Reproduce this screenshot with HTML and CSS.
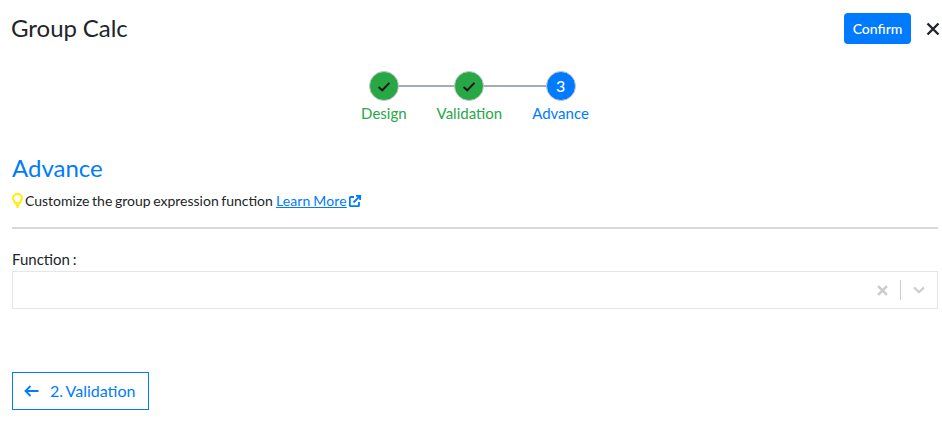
FILE: index.html
```html
<!DOCTYPE html>
<html>
<head>
  <link rel="stylesheet" href="styles.css">
</head>
<body>
  <header class="topbar">
    <h1 class="title">Group Calc</h1>
    <div class="actions">
      <button class="confirm">Confirm</button>
      <svg class="close" width="14" height="14" viewBox="0 0 14 14" fill="none" stroke="#212529" stroke-width="2.4">
        <path d="M1.5 1.5l11 11M12.5 1.5l-11 11"/>
      </svg>
    </div>
  </header>

  <div class="stepper">
    <div class="step done">
      <div class="circle">
        <svg width="16" height="13" viewBox="0 0 14 12" fill="none" stroke="#14181c" stroke-width="1.8"><path d="M2 6.5l3.4 3L12 2.6"/></svg>
      </div>
      <span>Design</span>
    </div>
    <div class="step done">
      <div class="circle">
        <svg width="16" height="13" viewBox="0 0 14 12" fill="none" stroke="#14181c" stroke-width="1.8"><path d="M2 6.5l3.4 3L12 2.6"/></svg>
      </div>
      <span>Validation</span>
    </div>
    <div class="step active">
      <div class="circle">3</div>
      <span>Advance</span>
    </div>
  </div>

  <section class="content">
    <h2 class="heading">Advance</h2>
    <p class="hint">
      <svg class="bulb" width="11" height="15" viewBox="0 0 11 15" fill="none" stroke="#ffee00" stroke-width="2">
        <path d="M3.4 10.2C3.2 8.4 1 7.4 1 5.1 1 2.8 3 1 5.5 1S10 2.8 10 5.1c0 2.3-2.2 3.3-2.4 5.1z"/>
        <path d="M3.8 12.2h3.4M4.5 14h2"/>
      </svg>
      <span>Customize the group expression function</span>
      <a href="#">Learn More</a>
      <svg class="ext" width="12" height="12" viewBox="0 0 12 12" fill="none" stroke="#007bff" stroke-width="1.8">
        <path d="M5 2H1.8A1 1 0 0 0 .8 3v7.200a1 1 0 0 0 1 1H9a1 1 0 0 0 1-1V7"/>
        <path d="M4.500 7.500L10.800 1.200M7 .9h4.100V5"/>
      </svg>
    </p>
    <hr class="rule">

    <label class="field-label">Function :</label>
    <div class="select">
      <svg width="11" height="11" viewBox="0 0 10 10" fill="none" stroke="#cccccc" stroke-width="2.4"><path d="M1 1l8 8M9 1l-8 8"/></svg>
      <div class="sep"></div>
      <svg class="chev" width="12" height="8" viewBox="0 0 12 8" fill="none" stroke="#cccccc" stroke-width="2.2"><path d="M1 1.500l5 4.500 5-4.500"/></svg>
    </div>

    <button class="back">
      <svg width="15" height="12" viewBox="0 0 15 12" fill="none" stroke="#007bff" stroke-width="1.800"><path d="M14.500 6H1.500M6.500 1l-5 5 5 5"/></svg>
      <span class="back-label">2. Validation</span>
    </button>
  </section>
</body>
</html>
```

FILE: styles.css
```css
* {
  margin: 0;
  padding: 0;
  box-sizing: border-box;
  font-family: Lato, sans-serif;
}

body {
  background: white;
  color: #212529;
  overflow: hidden;
}

.topbar {
  display: flex;
  justify-content: space-between;
  align-items: flex-start;
  padding: 13px 2px 0 11px;
}

.title {
  font-size: 24px;
  font-weight: 400;
  line-height: 29px;
  word-spacing: -0.5px;
}

.actions {
  display: flex;
  align-items: center;
  gap: 15px;
}

.confirm {
  width: 67px;
  height: 31px;
  border: none;
  border-radius: 4px;
  background: #007bff;
  color: white;
  font-size: 14px;
  font-weight: 500;
}

.stepper {
  position: relative;
  display: flex;
  justify-content: center;
  gap: 30px;
  width: 228px;
  margin: 27px 0 0 361px;
}

.stepper::before {
  content: '';
  position: absolute;
  top: 14px;
  left: 23px;
  width: 180px;
  height: 2px;
  background: #a3abb3;
}

.step {
  position: relative;
  display: flex;
  flex-direction: column;
  align-items: center;
  font-size: 15px;
  line-height: 18px;
}

.circle {
  display: flex;
  align-items: center;
  justify-content: center;
  width: 30px;
  height: 30px;
  margin-bottom: 3px;
  border: 1px solid #c4c8cc;
  border-radius: 50%;
  color: white;
  font-size: 16px;
  font-weight: 500;
}

.step.done {
  color: #28a745;
}

.step.done .circle {
  background: #28a745;
}

.step.active {
  color: #007bff;
}

.step.active .circle {
  background: #007bff;
}

.content {
  padding: 0 4px 0 12px;
}

.heading {
  margin-top: 31px;
  font-size: 24px;
  font-weight: 400;
  line-height: 29px;
  color: #007bff;
}

.hint {
  display: flex;
  align-items: center;
  margin-top: 10px;
  font-size: 14px;
  line-height: 17px;
  word-spacing: -1px;
}

.bulb {
  margin-right: 2px;
}

.hint a {
  margin-left: 3px;
  color: #007bff;
  letter-spacing: 0.15px;
}

.ext {
  margin-left: 2px;
}

.rule {
  margin-top: 18px;
  border: none;
  border-top: 2px solid #d8d8d8;
}

.field-label {
  display: block;
  margin-top: 21px;
  font-size: 15px;
  line-height: 18px;
  word-spacing: -1px;
}

.select {
  display: flex;
  align-items: center;
  justify-content: flex-end;
  height: 38px;
  margin-top: 3px;
  padding-right: 12px;
  border: 1px solid #e3e6ea;
}

.sep {
  width: 1px;
  height: 20px;
  margin: 0 12px;
  background: #cccccc;
}

.back {
  display: flex;
  align-items: center;
  gap: 10px;
  width: 137px;
  height: 38px;
  margin-top: 63px;
  padding-left: 11px;
  border: 1px solid #007bff;
  background: white;
  color: #007bff;
  font-size: 16px;
  word-spacing: -1px;
}

.back-label {
  padding: 0 0 2px 1px;
}
```
